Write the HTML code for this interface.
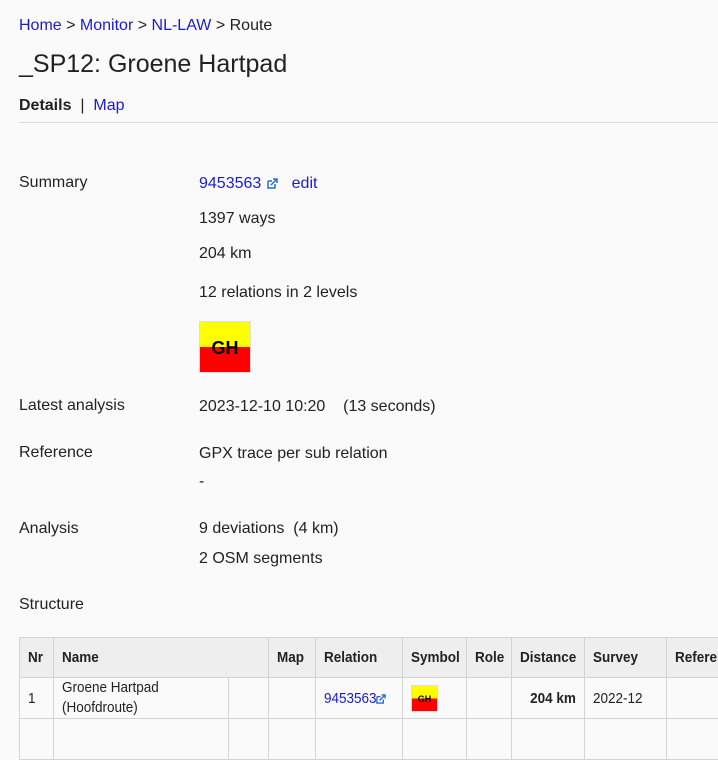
<!DOCTYPE html>
<html><head><meta charset="utf-8"><style>
body{margin:0;width:718px;height:724px;overflow:hidden;background:#fafafa;font-family:"Liberation Sans",sans-serif;color:#222;position:relative}
.a{position:absolute;white-space:nowrap}
a{color:#1a1ad6;text-decoration:none}
.f16{font-size:16px}
.ext{display:inline-block;vertical-align:middle;margin-left:6px}
.sym{position:absolute;border:1px solid #ddd;background:linear-gradient(#ff0 50%,#f00 50%);font-weight:bold;text-align:center;color:#000}
table{position:absolute;left:19px;top:637px;border-collapse:collapse;font-size:15px;table-layout:fixed;width:780px}
td,th{border:1px solid #d4d4d4;padding:0 8px;text-align:left;white-space:nowrap;overflow:hidden}
th{background:#eee;height:39px;font-weight:bold}
th span,td span.n{display:inline-block;transform:scaleX(.9);transform-origin:left}
td{height:40px;background:#fafafa}
</style></head><body>
<div class="a f16" style="left:19px;top:17px"><a>Home</a> &gt; <a>Monitor</a> &gt; <a>NL-LAW</a> &gt; Route</div>
<div class="a" style="left:19px;top:50px;font-size:25px;color:#222">_SP12: Groene Hartpad</div>
<div class="a f16" style="left:19px;top:97px"><b>Details</b> &nbsp;| &nbsp;<a>Map</a></div>
<div class="a" style="left:19px;top:122px;width:699px;height:1px;background:#ddd"></div>

<div class="a f16" style="left:19px;top:174px">Summary</div>
<div class="a f16" style="left:199px;top:175px"><a>9453563</a><svg class="ext" width="11" height="11" viewBox="0 0 11 11"><path d="M1 3h4M1 3v7h7V6" fill="none" stroke="#2a6ad6" stroke-width="1.5"/><path d="M4 7L10 1M6 1h4v4" fill="none" stroke="#2a6ad6" stroke-width="1.5"/></svg> &nbsp; <a>edit</a></div>
<div class="a f16" style="left:199px;top:210px">1397 ways</div>
<div class="a f16" style="left:199px;top:245px">204 km</div>
<div class="a f16" style="left:199px;top:284px">12 relations in 2 levels</div>
<div class="sym" style="left:199px;top:321px;width:50px;height:50px;line-height:52px;font-size:18px">GH</div>

<div class="a f16" style="left:19px;top:397px">Latest analysis</div>
<div class="a f16" style="left:199px;top:398px">2023-12-10 10:20 &nbsp; &nbsp;(13 seconds)</div>
<div class="a f16" style="left:19px;top:444px">Reference</div>
<div class="a f16" style="left:199px;top:445px">GPX trace per sub relation</div>
<div class="a f16" style="left:199px;top:473px">-</div>
<div class="a f16" style="left:19px;top:520px">Analysis</div>
<div class="a f16" style="left:199px;top:520px">9 deviations &nbsp;(4 km)</div>
<div class="a f16" style="left:199px;top:550px">2 OSM segments</div>
<div class="a f16" style="left:19px;top:596px">Structure</div>

<table>
<colgroup><col style="width:34px"><col style="width:175px"><col style="width:40px"><col style="width:47px"><col style="width:87px"><col style="width:64px"><col style="width:45px"><col style="width:73px"><col style="width:82px"><col style="width:133px"></colgroup>
<tr><th><span>Nr</span></th><th colspan="2"><span>Name</span></th><th><span>Map</span></th><th><span>Relation</span></th><th><span>Symbol</span></th><th><span>Role</span></th><th><span>Distance</span></th><th><span>Survey</span></th><th><span>Reference</span></th></tr>
<tr><td><span class="n">1</span></td><td style="line-height:20px"><span class="n">Groene Hartpad<br>(Hoofdroute)</span></td><td></td><td></td><td><span class="n"><a>9453563</a></span><svg style="margin-left:-6px;vertical-align:middle" width="10" height="10" viewBox="0 0 11 11"><path d="M1 3h4M1 3v7h7V6" fill="none" stroke="#2a6ad6" stroke-width="1.5"/><path d="M4 7L10 1M6 1h4v4" fill="none" stroke="#2a6ad6" stroke-width="1.5"/></svg></td><td><div class="sym" style="position:relative;width:25px;height:25px;font-size:9px;line-height:26px">GH</div></td><td></td><td style="text-align:right"><span class="n" style="font-weight:bold;transform-origin:right">204 km</span></td><td><span class="n">2022-12</span></td><td></td></tr>
<tr><td></td><td></td><td></td><td></td><td></td><td></td><td></td><td></td><td></td><td></td></tr>
</table>
</body></html>
